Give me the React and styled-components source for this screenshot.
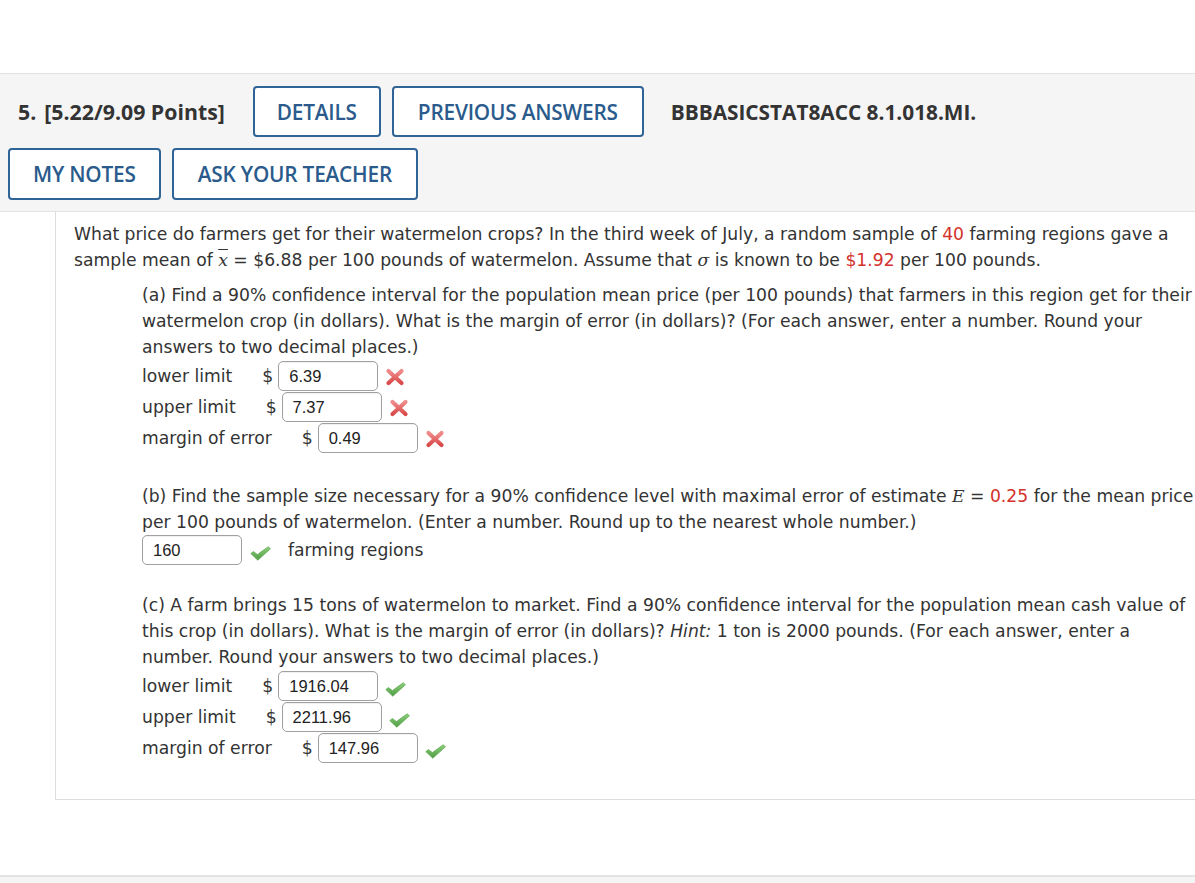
import React from "react";
import styled, { createGlobalStyle } from "styled-components";

const Global = createGlobalStyle`
  html, body { margin: 0; padding: 0; background: #fff; }
  body { font-family: "DejaVu Sans", Verdana, sans-serif; color: #333; }
`;

const Page = styled.div`
  padding-top: 73px;
  width: 1195px;
  height: 883px;
  overflow: hidden;
  box-sizing: border-box;
`;

const Header = styled.div`
  background: #f5f5f5;
  border-top: 1px solid #e2e2e2;
  border-bottom: 1px solid #e2e2e2;
  padding: 12px 8px 11px 8px;
  display: flex;
  flex-direction: column;
  gap: 11px;
  font-family: "Open Sans", sans-serif;
`;

const NextHeader = styled.div`
  margin-top: 75px;
  height: 30px;
  background: #f5f5f5;
  border-top: 2px solid #e4e4e4;
`;

const HeaderRow = styled.div`
  display: flex;
  align-items: center;
  gap: 11px;
`;

const Points = styled.div`
  font-weight: 700;
  font-size: 21.3px;
  color: #333;
  padding-left: 10px;
  margin-right: 17px;
`;

const Num = styled.span`
  margin-right: 8px;
`;

const Btn = styled.button`
  font-family: "Open Sans", sans-serif;
  font-weight: 600;
  font-size: 20.8px;
  color: #2a5b8c;
  background: #fff;
  border: 2px solid #2f6596;
  border-radius: 4px;
  height: ${(p) => p.$h || 51}px;
  padding: 0 ${(p) => p.$px || 21}px;
  letter-spacing: -0.2px;
`;

const Code = styled.div`
  font-weight: 700;
  font-size: 20.8px;
  color: #333;
  margin-left: 16px;
`;

const Content = styled.div`
  margin-left: 55px;
  border-left: 1px solid #ddd;
  border-bottom: 1px solid #ddd;
  padding: 9px 0 0 18px;
  height: 588px;
  box-sizing: border-box;
  font-size: 17.2px;
  line-height: 26px;
  color: #333;
`;

const Para = styled.p`
  margin: 0 0 ${(p) => p.$mb || 0}px 0;
  white-space: nowrap;
`;

const Part = styled.div`
  margin-left: 68px;
  margin-top: ${(p) => p.$mt || 0}px;
`;

const Red = styled.span`
  color: #d4322c;
`;

const Sym = styled.span`
  font-family: "DejaVu Serif", serif;
  font-style: italic;
`;

const Bar = styled.span`
  text-decoration: overline;
`;

const AnswerRow = styled.div`
  display: flex;
  align-items: center;
  height: ${(p) => p.$h || 31}px;
`;

const Label = styled.span`
  margin-right: ${(p) => p.$gap || 30}px;
`;

const Dollar = styled.span`
  margin-right: 5px;
`;

const Input = styled.div`
  width: ${(p) => p.$w || 100}px;
  height: 30px;
  box-sizing: border-box;
  border: 1px solid #a0a0a0;
  border-radius: 5px;
  box-shadow: inset 0 1px 1px rgba(0,0,0,0.06);
  font-family: "Liberation Sans", Arial, sans-serif;
  font-size: 16.5px;
  color: #222;
  padding-left: 10px;
  display: flex;
  align-items: center;
  background: #fff;
`;

const Mark = styled.span`
  display: inline-flex;
  margin-left: ${(p) => p.$ml || 7}px;
  margin-right: ${(p) => p.$mr || 0}px;
  padding-top: ${(p) => p.$pt || 0}px;
`;

const Em = styled.i``;

const Cross = () => (
  <svg width="20" height="18" viewBox="0 0 20 18">
    <defs>
      <linearGradient id="xg" x1="0" y1="0" x2="0" y2="1">
        <stop offset="0" stopColor="#f08c8c" />
        <stop offset="1" stopColor="#d94a4a" />
      </linearGradient>
    </defs>
    <path d="M3.5 3 L16.5 15 M16.5 3 L3.5 15" stroke="url(#xg)" strokeWidth="4.2" strokeLinecap="round" />
  </svg>
);

const Check = () => (
  <svg width="21" height="15" viewBox="0 0 21 15">
    <defs>
      <linearGradient id="cg" x1="0" y1="0" x2="0" y2="1">
        <stop offset="0" stopColor="#8fd07c" />
        <stop offset="1" stopColor="#4e9c44" />
      </linearGradient>
    </defs>
    <path d="M0.8 7.6 L3.4 5.6 L7.4 8.6 L18.2 0.8 L20.4 2.8 L7.8 14.2 Z" fill="url(#cg)" stroke="#62ac55" strokeWidth="0.8" strokeLinejoin="round" />
  </svg>
);

const Answer = ({ label, value, ok }) => (
  <AnswerRow>
    <Label>{label}</Label>
    <Dollar>$</Dollar>
    <Input>{value}</Input>
    {ok ? (
      <Mark $pt={7}><Check /></Mark>
    ) : (
      <Mark $pt={2}><Cross /></Mark>
    )}
  </AnswerRow>
);

export default function App() {
  return (
    <Page>
      <Global />
      <Header>
        <HeaderRow>
          <Points>
            <Num>5.</Num>[5.22/9.09 Points]
          </Points>
          <Btn $px={22}>DETAILS</Btn>
          <Btn $px={24}>PREVIOUS ANSWERS</Btn>
          <Code>BBBASICSTAT8ACC 8.1.018.MI.</Code>
        </HeaderRow>
        <HeaderRow>
          <Btn $px={23} $h={52}>MY NOTES</Btn>
          <Btn $px={24} $h={52}>ASK YOUR TEACHER</Btn>
        </HeaderRow>
      </Header>
      <Content>
        <Para>
          What price do farmers get for their watermelon crops? In the third week of July, a random sample of <Red>40</Red> farming regions gave a
        </Para>
        <Para $mb={9}>
          sample mean of <Bar><Sym>x</Sym></Bar> = $6.88 per 100 pounds of watermelon. Assume that <Sym>σ</Sym> is known to be <Red>$1.92</Red> per 100 pounds.
        </Para>
        <Part>
          <Para>(a) Find a 90% confidence interval for the population mean price (per 100 pounds) that farmers in this region get for their</Para>
          <Para>watermelon crop (in dollars). What is the margin of error (in dollars)? (For each answer, enter a number. Round your</Para>
          <Para>answers to two decimal places.)</Para>
          <Answer label="lower limit" value="6.39" />
          <Answer label="upper limit" value="7.37" />
          <Answer label="margin of error" value="0.49" />
        </Part>
        <Part $mt={30}>
          <Para>(b) Find the sample size necessary for a 90% confidence level with maximal error of estimate <Sym>E</Sym> = <Red>0.25</Red> for the mean price</Para>
          <Para>per 100 pounds of watermelon. (Enter a number. Round up to the nearest whole number.)</Para>
          <AnswerRow $h={30}>
            <Input>160</Input>
            <Mark $ml={8} $mr={17} $pt={7}><Check /></Mark>
            farming regions
          </AnswerRow>
        </Part>
        <Part $mt={27}>
          <Para>(c) A farm brings 15 tons of watermelon to market. Find a 90% confidence interval for the population mean cash value of</Para>
          <Para>this crop (in dollars). What is the margin of error (in dollars)? <Em>Hint:</Em> 1 ton is 2000 pounds. (For each answer, enter a</Para>
          <Para>number. Round your answers to two decimal places.)</Para>
          <Answer label="lower limit" value="1916.04" ok />
          <Answer label="upper limit" value="2211.96" ok />
          <Answer label="margin of error" value="147.96" ok />
        </Part>
      </Content>
      <NextHeader />
    </Page>
  );
}
